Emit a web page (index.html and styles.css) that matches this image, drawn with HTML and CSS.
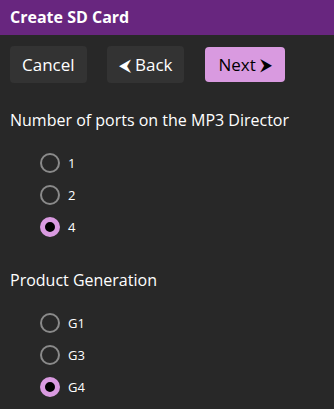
FILE: index.html
```html
<!DOCTYPE html>
<html>
<head>
    <meta charset="utf-8">
    <title>Create SD Card</title>
    <link rel="stylesheet" href="styles.css">
</head>
<body>
    <div class="titlebar">Create SD Card</div>
    <div class="toolbar">
        <button class="button">Cancel</button>
        <button class="button">&#x2B9C; Back</button>
        <button class="button next">Next &#x2B9E;</button>
    </div>

    <div class="group">
        <div class="heading">Number of ports on the MP3 Director</div>
        <label class="option"><span class="radio"></span>1</label>
        <label class="option"><span class="radio"></span>2</label>
        <label class="option"><span class="radio checked"></span>4</label>
    </div>

    <div class="group">
        <div class="heading">Product Generation</div>
        <label class="option"><span class="radio"></span>G1</label>
        <label class="option"><span class="radio"></span>G3</label>
        <label class="option"><span class="radio checked"></span>G4</label>
    </div>
</body>
</html>
```
FILE: styles.css
```css
/*page*/
body {
    margin: 0;
    background-color: #282828;
    color: #ffffff;
    font-family: "Open Sans", "Noto Sans", sans-serif;
}

.titlebar {
    height: 35px;
    line-height: 35px;
    padding-left: 10px;
    background-color: #68267f;
    font-size: 16px;
    font-weight: bold;
}
/*buttons*/
.toolbar {
    display: flex;
    gap: 20px;
    padding: 11px 10px 0 10px;
}

.button {
    height: 37px;
    padding: 0 12px;
    font-family: inherit;
    font-size: 17px;
    color: #ffffff;
    background-color: #333333;
    border: none;
    border-radius: 4px;
}

.next {
    height: 35px;
    margin-top: 1px;
    margin-left: 1px;
    padding: 0 13px;
    color: #000000;
    background-color: #d99ae0;
}
/*radio groups*/
.group {
    padding: 0 10px;
}

.heading {
    margin-top: 26px;
    margin-bottom: 16px;
    font-size: 16px;
}

.option {
    display: flex;
    align-items: center;
    gap: 8px;
    height: 32px;
    padding-left: 30px;
    font-size: 13px;
}

.radio {
    width: 16px;
    height: 16px;
    border: 2px solid #8a8a8a;
    border-radius: 50%;
}

.radio.checked {
    width: 10px;
    height: 10px;
    border: 5px solid #d99ae0;
    background-color: #000000;
}
```
